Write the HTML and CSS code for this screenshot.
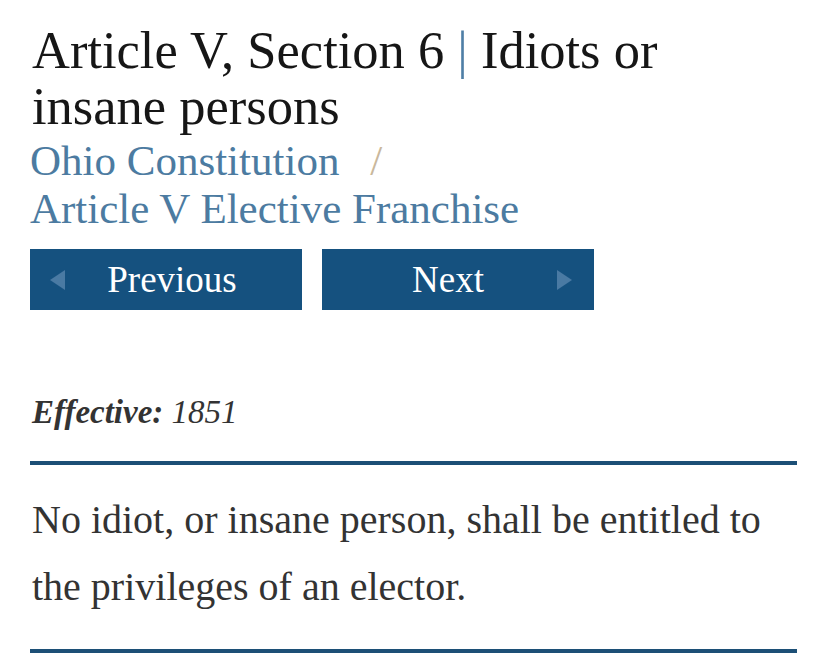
FILE: index.html
```html
<!DOCTYPE html>
<html lang="en">
<head>
    <meta charset="UTF-8">
    <meta name="viewport" content="width=device-width, initial-scale=1.0">
    <title>Article V, Section 6 | Idiots or insane persons</title>
    <link rel="stylesheet" href="styles.css">
</head>
<body>

<div class="page">
    <h1 class="title">
        <span>Article V, Section 6</span> <span class="pipe">|</span> <span>Idiots or</span><br>
        <span>insane persons</span>
    </h1>

    <div class="crumbs">
        <a href="#">Ohio Constitution</a> <span class="slash">/</span><br>
        <a href="#">Article V Elective Franchise</a>
    </div>

    <div class="pager">
        <a href="#" class="btn prev"><span class="arrow left"></span>Previous</a>
        <a href="#" class="btn next">Next<span class="arrow right"></span></a>
    </div>

    <p class="effective"><b>Effective:</b> 1851</p>

    <div class="section-text">
        <p>No idiot, or insane person, shall be entitled to the privileges of an elector.</p>
    </div>
</div>

</body>
</html>
```

FILE: styles.css
```css
body {
    margin: 0;
    background: #fff;
    font-family: "Liberation Serif", serif;
}

.page {
    padding: 22px 31px 0 30px;
}

.title {
    font-size: 52.5px;
    font-weight: normal;
    line-height: 56px;
    color: #161616;
    margin: 0 0 0 2px;
}

.pipe {
    color: #4f7fa6;
}

.crumbs {
    font-size: 43px;
    line-height: 48px;
    margin-top: 3px;
}

.crumbs a {
    color: #4c7ba1;
    text-decoration: none;
}

.slash {
    color: #c9b89c;
    margin-left: 20px;
}

.pager {
    display: flex;
    gap: 20px;
    margin-top: 16px;
}

.btn {
    display: flex;
    align-items: center;
    justify-content: center;
    width: 272px;
    height: 61px;
    background: #15517f;
    color: #fff;
    font-size: 37px;
    text-decoration: none;
    position: relative;
    box-sizing: border-box;
}

.prev {
    padding-left: 12px;
}

.next {
    padding-right: 20px;
}

.arrow {
    position: absolute;
    top: 21px;
    width: 0;
    height: 0;
    border-top: 10px solid transparent;
    border-bottom: 10px solid transparent;
}

.arrow.left {
    left: 20px;
    border-right: 15px solid #4a7aa3;
}

.arrow.right {
    right: 22px;
    border-left: 15px solid #4a7aa3;
}

.effective {
    font-size: 33px;
    font-style: italic;
    color: #333;
    margin: 82px 0 0 2px;
    line-height: 40px;
}

.section-text {
    border-top: 4px solid #1c4f76;
    border-bottom: 4px solid #1c4f76;
    margin-top: 29px;
}

.section-text p {
    font-size: 40px;
    line-height: 67px;
    color: #333;
    margin: 21px 0 29px 2px;
}
```
